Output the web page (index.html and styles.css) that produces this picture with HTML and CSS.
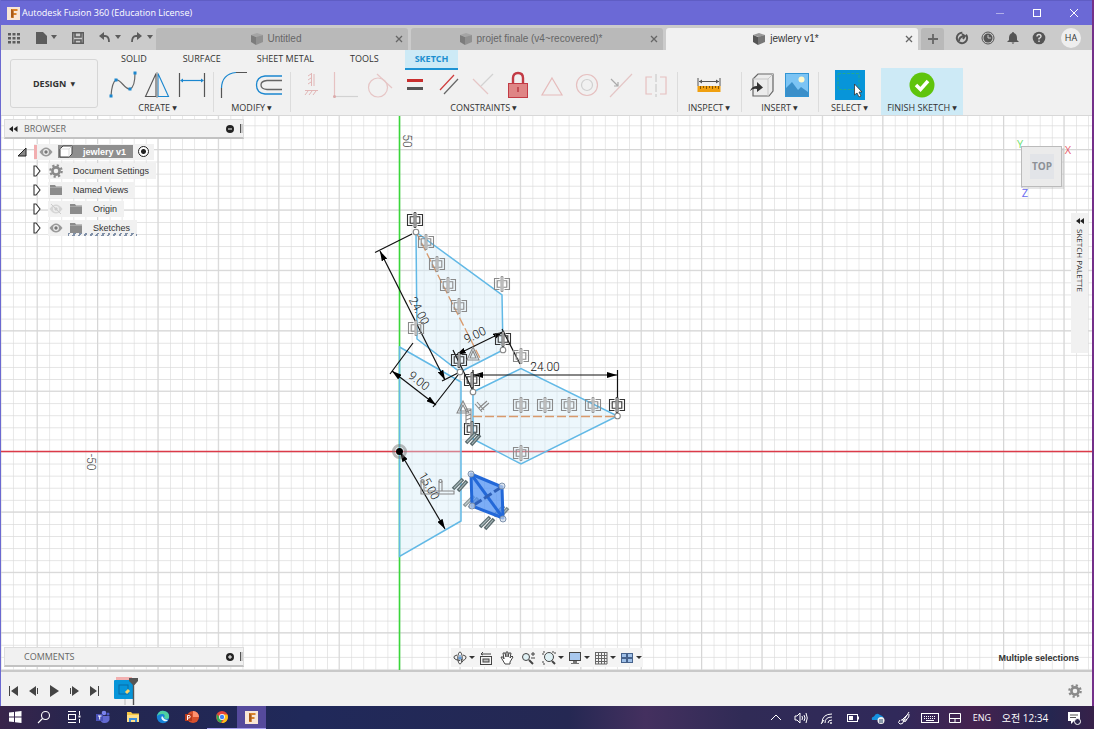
FILE: index.html
```html
<!DOCTYPE html>
<html lang="en">
<head>
    <meta charset="UTF-8">
    <meta name="viewport" content="width=device-width, initial-scale=1.0">
    <title>Autodesk Fusion 360 (Education License)</title>
    <link rel="stylesheet" href="styles.css">
</head>
<body>
    <!-- shared symbols -->
    <svg class="defs" aria-hidden="true">
        <symbol id="cube" viewBox="0 0 14 14">
            <path d="M1 3 L7 1 L13 3 L7 5Z" fill="#999"/>
            <path d="M1 3 L6 5 V13 L1 10Z" fill="#555"/>
            <path d="M6 5 L13 3 V10 L6 13Z" fill="#777"/>
        </symbol>
        <symbol id="gear" viewBox="0 0 14 14">
            <circle cx="7" cy="7" r="3.6" fill="none" stroke="#8a8a8a" stroke-width="2.6"/>
            <circle cx="7" cy="7" r="5.7" fill="none" stroke="#8a8a8a" stroke-width="2.2" stroke-dasharray="2.2 2.28"/>
        </symbol>
        <symbol id="folder" viewBox="0 0 14 12">
            <path d="M1 1H6L7 2.5H13V11H1Z" fill="#8c8c8c"/>
            <path d="M1 3.5H13" stroke="#b5b5b5" stroke-width=".7"/>
        </symbol>
        <symbol id="eye" viewBox="0 0 14 10">
            <path d="M0.5 5Q7 -4 13.5 5Q7 14 0.5 5Z" fill="#999"/>
            <circle cx="7" cy="5" r="2.9" fill="#eee"/>
            <circle cx="7" cy="5" r="1.7" fill="#777"/>
        </symbol>
        <symbol id="caret" viewBox="0 0 10 12">
            <path d="M2 1H4L8 6L4 11H2Z" fill="#fff" stroke="#333" stroke-width="1.1"/>
        </symbol>
        <symbol id="fusion" viewBox="0 0 13 13">
            <rect width="13" height="13" fill="#f8e6d6"/>
            <path d="M4 2H10.5V4H6.5V6H9.5V8H6.5V11H4Z" fill="#d9822b"/>
            <path d="M4 2L6.5 4V11L4 10Z" fill="#a85a18"/>
        </symbol>
        <symbol id="sym" viewBox="-8 -8 16 16" overflow="visible">
            <path d="M-2.5 -5.5H-7.5V5.5H-2.5M2.5 -5.5H7.5V5.5H2.5M-1.5 -3.2H-4.8V3.2H-1.5M1.5 -3.2H4.8V3.2H1.5" fill="none" stroke="currentColor" stroke-width="1.1"/>
            <path d="M-1 -7.5H1V7.5H-1Z" fill="#ddd" stroke="currentColor" stroke-width=".8"/>
        </symbol>
        <symbol id="par" viewBox="-8 -8 16 16" overflow="visible">
            <path d="M-7 4L3 -6M-2 6L7 -4" stroke="#5d6d70" stroke-width="3.6"/>
            <path d="M-6 3L2 -5M-1 5L6 -3" stroke="#a8b8ba" stroke-width="1.1"/>
        </symbol>
    </svg>

    <div class="window">
        <header class="titlebar">
            <svg width="13" height="13"><use href="#fusion"/></svg>
            <span class="title">Autodesk Fusion 360 (Education License)</span>
            <div class="window-controls">
                <button aria-label="Minimize"><svg width="10" height="10"><path d="M1 5.5H9" stroke="#b0aee8"/></svg></button>
                <button aria-label="Maximize"><svg width="10" height="10"><rect x="1.5" y="1.5" width="7" height="7" fill="none" stroke="#fff"/></svg></button>
                <button aria-label="Close"><svg width="10" height="10"><path d="M1 1L9 9M9 1L1 9" stroke="#fff"/></svg></button>
            </div>
        </header>

        <div class="tabbar">
            <div class="quick">
                <button aria-label="Data panel"><svg width="12" height="12" fill="#5c5c5c"><path d="M0 1h3v2.500H0zM4.500 1h3v2.500h-3zM9 1h3v2.500H9zM0 5h3v2.500H0zM4.500 5h3v2.500h-3zM9 5h3v2.500H9zM0 9h3v2.500H0zM4.500 9h3v2.500h-3zM9 9h3v2.500H9z"/></svg></button>
                <button class="wide" aria-label="File"><svg width="22" height="14" fill="#5c5c5c"><path d="M1 1H8L12 5V13H1ZM16 4H22L19 8Z"/></svg></button>
                <button aria-label="Save"><svg width="12" height="12"><path d="M.8.8H11.200V11.200H.8Z" fill="none" stroke="#5c5c5c" stroke-width="1.600"/><path d="M3 1V5H9V1M3 11V8H9V11" fill="none" stroke="#5c5c5c" stroke-width="1.600"/></svg></button>
                <button class="wide" aria-label="Undo"><svg width="22" height="12"><path d="M2 4H6Q10 4 10 10" fill="none" stroke="#5c5c5c" stroke-width="1.800"/><path d="M5 0V8L0 4ZM16 3H22L19 7Z" fill="#5c5c5c"/></svg></button>
                <button class="wide" aria-label="Redo"><svg width="22" height="12"><path d="M8 4H5Q1 4 1 10" fill="none" stroke="#5c5c5c" stroke-width="1.800"/><path d="M6 0V8L11 4ZM16 3H22L19 7Z" fill="#5c5c5c"/></svg></button>
            </div>
            <nav class="tabs">
                <div class="tab">
                    <a href="#"><svg width="14" height="14" opacity=".6"><use href="#cube"/></svg>Untitled</a>
                    <button aria-label="Close tab"><svg width="8" height="8"><path d="M1 1L7 7M7 1L1 7" stroke="#666" stroke-width="1.300"/></svg></button>
                </div>
                <div class="tab">
                    <a href="#"><svg width="14" height="14" opacity=".6"><use href="#cube"/></svg>projet finale (v4~recovered)*</a>
                    <button aria-label="Close tab"><svg width="8" height="8"><path d="M1 1L7 7M7 1L1 7" stroke="#666" stroke-width="1.300"/></svg></button>
                </div>
                <div class="tab active">
                    <a href="#"><svg width="14" height="14"><use href="#cube"/></svg>jewlery v1*</a>
                    <button aria-label="Close tab"><svg width="8" height="8"><path d="M1 1L7 7M7 1L1 7" stroke="#666" stroke-width="1.300"/></svg></button>
                </div>
            </nav>
            <div class="account">
                <button class="add" aria-label="New design"><svg width="10" height="10"><path d="M5 0V10M0 5H10" stroke="#666" stroke-width="1.800"/></svg></button>
                <button aria-label="Extensions"><svg width="14" height="14"><circle cx="7" cy="7" r="5.200" fill="none" stroke="#555" stroke-width="2" stroke-dasharray="26 4" transform="rotate(-20 7 7)"/><path d="M4 10Q4 6 9 5M7 3L10 5L8 8" fill="none" stroke="#555" stroke-width="1.800"/></svg></button>
                <button aria-label="Job status"><svg width="14" height="14"><circle cx="7" cy="7" r="6" fill="none" stroke="#555"/><circle cx="7" cy="7" r="4.500" fill="#555"/><path d="M7 4V7H10" fill="none" stroke="#ccc"/></svg></button>
                <button aria-label="Notifications"><svg width="14" height="14" fill="#555"><path d="M7 1Q8 1 8 2Q11 3 11 7V9L13 11H1L3 9V7Q3 3 6 2Q6 1 7 1ZM5.500 11.500H8.500L7 13Z"/></svg></button>
                <button aria-label="Help"><svg width="14" height="14"><circle cx="7" cy="7" r="6.300" fill="#555"/><path d="M5 5.500Q5 3.500 7 3.500T9 5.500Q9 6.500 7 7.500V8.500M7 9.500V11" fill="none" stroke="#ddd" stroke-width="1.400"/></svg></button>
                <button class="avatar">HA</button>
            </div>
        </div>

        <section class="ribbon">
            <button class="workspace-menu">DESIGN <span class="arrow">▼</span></button>
            <div class="ribbon-main">
                <nav class="ribbon-tabs">
                    <a href="#">SOLID</a>
                    <a href="#">SURFACE</a>
                    <a href="#">SHEET METAL</a>
                    <a href="#">TOOLS</a>
                    <a href="#" class="active">SKETCH</a>
                </nav>
                <div class="groups">
                    <div class="group create">
                        <div class="tools">
                            <button aria-label="Spline"><svg width="28" height="28"><path d="M2 25Q3 11 7 9C12 8 16 19 21 18Q26 16 26 2" fill="none" stroke="#666" stroke-width="1.200"/><path d="M.5 23.500h3v3h-3zM5.500 7.500h3v3h-3zM19.500 16.500h3v3h-3zM24.500.5h3v3h-3z" fill="#1b87cf"/></svg></button>
                            <button aria-label="Mirror"><svg width="28" height="28" fill="none" stroke-width="1.100"><path d="M13 2.500L2.500 25.500H13Z" stroke="#555"/><path d="M15 2.500L25.500 25.500H15Z" stroke="#1b87cf"/><path d="M14 1V27" stroke="#999"/></svg></button>
                            <button aria-label="Sketch Dimension"><svg width="28" height="28"><path d="M1.500 2V26M26.500 2V26" stroke="#555" stroke-width="1.200"/><path d="M4 9.500H24" stroke="#1b87cf" stroke-width="1.200"/><path d="M2 9.500L5 7.500V11.500ZM26 9.500L23 7.500V11.500Z" fill="#1b87cf"/></svg></button>
                        </div>
                        <button class="label">CREATE <span class="arrow">▼</span></button>
                    </div>
                    <div class="group modify">
                        <div class="tools">
                            <button aria-label="Fillet"><svg width="28" height="28" fill="none" stroke-width="1.200"><path d="M1.500 17Q2 3 16 1.500" stroke="#1b87cf"/><path d="M1.500 17V27M16 1.500H27" stroke="#555"/></svg></button>
                            <button aria-label="Offset"><svg width="28" height="28" fill="none" stroke-width="1.300"><path d="M27 5H10Q1.500 6 1.500 14T10 23H27" stroke="#1b87cf"/><path d="M27 9.500H12Q6 10 6 14T12 18.500H27" stroke="#666"/></svg></button>
                        </div>
                        <button class="label">MODIFY <span class="arrow">▼</span></button>
                    </div>
                    <div class="group constraints">
                        <div class="tools">
                            <button aria-label="Horizontal/Vertical"><svg width="28" height="28" fill="none" stroke="#e2b6b6"><path d="M14.500 2V15M11 5L14 3M11 9L14 7M11 13L14 11M17 3V15"/><path d="M8 19.500H21M8 24L11 20M12 24L15 20M16 24L19 20" /></svg></button>
                            <button aria-label="Coincident"><svg width="28" height="28" fill="none" stroke-width="1.200"><path d="M2.500 1V25" stroke="#e6c2c2"/><path d="M2 25.500H26" stroke="#d2d2d2"/><circle cx="2.500" cy="25.500" r="1.500" fill="#dcaaaa"/></svg></button>
                            <button aria-label="Tangent"><svg width="28" height="28" fill="none" stroke="#e6c6c6" stroke-width="1.200"><circle cx="12" cy="16.500" r="9.500"/><path d="M11 3L26 17"/></svg></button>
                            <button aria-label="Equal"><svg width="28" height="28"><path d="M6 8H22V11H6Z" fill="#c92f2f"/><path d="M6 16H22V19H6Z" fill="#555"/></svg></button>
                            <button aria-label="Parallel"><svg width="28" height="28" stroke-width="1.200"><path d="M5 19L19 4" stroke="#cf3b3b"/><path d="M9 23L23 8" stroke="#666"/></svg></button>
                            <button aria-label="Perpendicular"><svg width="28" height="28" stroke-width="1.200"><path d="M4 8L19 23" stroke="#e6c6c6"/><path d="M12 15L24 3" stroke="#d2d2d2"/></svg></button>
                            <button aria-label="Fix/Unfix"><svg width="28" height="28"><path d="M9 12V7Q9 2 14 2T19 7V12" fill="none" stroke="#c23b45" stroke-width="2.400"/><rect x="4.500" y="12.500" width="19" height="14" fill="#df8585" stroke="#c23b45"/><path d="M14 16V21" stroke="#b32d38" stroke-width="1.300"/></svg></button>
                            <button aria-label="Midpoint"><svg width="28" height="28"><path d="M14 7L24 24H4Z" fill="none" stroke="#e6bcbc" stroke-width="1.200"/></svg></button>
                            <button aria-label="Concentric"><svg width="28" height="28" fill="none" stroke-width="1.200"><circle cx="14" cy="14" r="10.500" stroke="#e6c0c0"/><circle cx="14" cy="14" r="5.500" stroke="#d0d0d0"/></svg></button>
                            <button aria-label="Collinear"><svg width="28" height="28" fill="none" stroke-width="1.200"><path d="M3 26L25 3" stroke="#e4c6c6"/><path d="M4 8L11 15M11 11V15H7" stroke="#aaa"/></svg></button>
                            <button aria-label="Symmetry"><svg width="28" height="28" fill="none" stroke-width="1.200"><path d="M10 6H4V23H10M18 6H24V23H18" stroke="#e6c0c0"/><path d="M14 3V26" stroke="#ccc" stroke-dasharray="8 2"/></svg></button>
                        </div>
                        <button class="label">CONSTRAINTS <span class="arrow">▼</span></button>
                    </div>
                    <div class="group inspect">
                        <div class="tools">
                            <button aria-label="Measure"><svg width="28" height="28"><path d="M3 7V15M25 7V15M4 10.500H24" stroke="#555"/><path d="M4 10.500L7 8.500V12.500ZM24 10.500L21 8.500V12.500Z" fill="#555"/><rect x="2.500" y="15" width="23" height="6" fill="#f0a010"/><path d="M5.500 15V18M8.500 15V17M11.500 15V18M14.500 15V17M17.500 15V18M20.500 15V17M23.500 15V18" stroke="#875500"/></svg></button>
                        </div>
                        <button class="label">INSPECT <span class="arrow">▼</span></button>
                    </div>
                    <div class="group insert">
                        <div class="tools">
                            <button aria-label="Insert Derive"><svg width="28" height="28"><path d="M5 8L10 3H25V20L21 25H5Z" fill="#ececec" stroke="#666" stroke-width="1.200"/><path d="M5 8H20V25M20 8L25 3" fill="none" stroke="#c8c8c8"/><path d="M2 20Q4 15 9 15V11L15 16.500L9 21V18Q5 17 2 20Z" fill="#333"/></svg></button>
                            <button aria-label="Insert Image"><svg width="28" height="28"><rect x="2.500" y="2.500" width="23" height="23" fill="#7cc4f4" stroke="#3295d4"/><path d="M3 17L9 11L15 19L18 16L25 21V25H3Z" fill="#3b8fc9"/><circle cx="18.500" cy="8.500" r="3" fill="#fff8cc"/></svg></button>
                        </div>
                        <button class="label">INSERT <span class="arrow">▼</span></button>
                    </div>
                    <div class="group select">
                        <div class="tools">
                            <button aria-label="Select"><svg width="30" height="30"><rect width="30" height="30" fill="#0795d9"/><rect x="3" y="3.500" width="21" height="16" fill="none" stroke="#22a890" stroke-dasharray="3 1.500"/><path d="M19.500 14V25L22 23L24 27L26 26L24 22H27Z" fill="#fff" stroke="#333" stroke-width=".8"/></svg></button>
                        </div>
                        <button class="label">SELECT <span class="arrow">▼</span></button>
                    </div>
                    <div class="group finish">
                        <div class="tools">
                            <button aria-label="Finish Sketch"><svg width="28" height="28"><circle cx="14" cy="14" r="12.500" fill="#5fc40c"/><path d="M8 14L12.500 18.500L20 10" fill="none" stroke="#fff" stroke-width="3.500"/></svg></button>
                        </div>
                        <button class="label">FINISH SKETCH <span class="arrow">▼</span></button>
                    </div>
                </div>
            </div>
        </section>

        <main class="workspace">
            <svg class="canvas" role="img" aria-label="Sketch canvas">
                <defs>
                    <pattern id="minor" width="12.08" height="12.08" x="399.5" y="451.5" patternUnits="userSpaceOnUse">
                        <path d="M0 0H12.08M0 0V12.08" stroke="#dadada" stroke-width="1.2"/>
                    </pattern>
                    <pattern id="major" width="60.4" height="60.4" x="369.3" y="421.3" patternUnits="userSpaceOnUse">
                        <path d="M0 30.2H60.4M30.2 0V60.4" stroke="#d6d6d6"/>
                    </pattern>
                    <marker id="arrow" viewBox="0 0 10 6" refX="10" refY="3" markerWidth="10" markerHeight="6" markerUnits="userSpaceOnUse" orient="auto-start-reverse">
                        <path d="M0 0L10 3L0 6Z"/>
                    </marker>
                </defs>
                <g transform="translate(-1 -116)">
                    <rect width="4000" height="3000" fill="url(#minor)"/>
                    <rect width="4000" height="3000" fill="url(#major)"/>
                    <path d="M0 451.500H4000" stroke="#dc3a48" stroke-width="1.600"/>
                    <path d="M399.500 0V3000" stroke="#3ad63a" stroke-width="1.600"/>

                    <!-- profiles -->
                    <g fill="#d2ebf8" fill-opacity=".4" stroke="#62b9e6" stroke-width="1.5">
                        <path d="M399.500 347L461 382V521L399.500 556.500Z"/>
                        <path d="M416 232L502 295L503 350L460 372L417 339Z"/>
                        <path d="M473 392L521 368.500L617.500 416L521 464L473 439Z"/>
                    </g>
                    <g fill="none" stroke="#d99a6c" stroke-width="1.3" stroke-dasharray="9 3">
                        <path d="M416 232L481 360"/>
                        <path d="M473 416.500H617"/>
                    </g>

                    <!-- dimensions -->
                    <g stroke="#111" stroke-width="1.2" fill="none">
                        <path d="M412 234L375 252.500M458 373L442 381"/>
                        <path d="M413 343L390 374M458 375L433 407"/>
                        <path d="M453 350L473 391M502 329L520 364"/>
                        <path d="M617.500 370V415M473 370V391"/>
                        <g marker-start="url(#arrow)" marker-end="url(#arrow)">
                            <path d="M380 251L445 380"/>
                            <path d="M392 371L436 405"/>
                            <path d="M456 355L503 332"/>
                            <path d="M473 375H617"/>
                            <path d="M400 452L445 529"/>
                        </g>
                    </g>
                    <g class="dims">
                        <text transform="translate(419 311) rotate(62)" dy="4">24.00</text>
                        <text transform="translate(419 381) rotate(38)" dy="4">9.00</text>
                        <text transform="translate(475 335) rotate(-26)" dy="4">9.00</text>
                        <text x="545" y="371">24.00</text>
                        <text transform="translate(429 486) rotate(60)" dy="4">15.00</text>
                        <text class="axis" transform="translate(407 141) rotate(90)" dy="4">50</text>
                        <text class="axis" transform="translate(91 462) rotate(90)" dy="4">-50</text>
                    </g>

                    <!-- constraint glyphs -->
                    <g color="#8a8a8a">
                        <use href="#sym" x="418" y="234" width="16" height="16"/>
                        <use href="#sym" x="429" y="256" width="16" height="16"/>
                        <use href="#sym" x="440" y="277" width="16" height="16"/>
                        <use href="#sym" x="451" y="298" width="16" height="16"/>
                        <use href="#sym" x="494" y="276" width="16" height="16"/>
                        <use href="#sym" x="408" y="320" width="16" height="16"/>
                        <use href="#sym" x="513" y="348" width="16" height="16"/>
                        <use href="#sym" x="513" y="397" width="16" height="16"/>
                        <use href="#sym" x="537" y="397" width="16" height="16"/>
                        <use href="#sym" x="561" y="397" width="16" height="16"/>
                        <use href="#sym" x="585" y="397" width="16" height="16"/>
                        <use href="#sym" x="513" y="445" width="16" height="16"/>
                    </g>
                    <g color="#333">
                        <use href="#sym" x="407" y="212" width="16" height="16"/>
                        <use href="#sym" x="495" y="331" width="16" height="16"/>
                        <use href="#sym" x="451" y="352" width="16" height="16"/>
                        <use href="#sym" x="464" y="372" width="16" height="16"/>
                        <use href="#sym" x="609" y="397" width="16" height="16"/>
                        <use href="#sym" x="464" y="421" width="16" height="16"/>
                    </g>
                    <g fill="none" stroke="#888" stroke-width="1.1">
                        <path d="M473 347L479 360H467ZM473 351L476 358H470Z"/>
                        <path d="M463 401L469 413H457ZM463 405L466 411H460Z"/>
                        <path d="M475 404L482 412M477 402L484 410M479 408L487 401M481 410L489 403"/>
                        <path d="M466 409V424H471V409ZM466 412L471 410M466 416L471 414M466 420L471 418"/>
                        <path d="M421 481V494H454V491H424V481ZM439 481V494M442 481V491"/>
                        <circle cx="422.500" cy="481" r="1.500"/>
                        <circle cx="440.500" cy="481" r="1.500"/>
                    </g>
                    <use href="#par" x="465" y="431" width="16" height="16"/>
                    <use href="#par" x="452" y="477" width="16" height="16"/>
                    <use href="#par" x="463" y="494" width="16" height="16" opacity=".7"/>
                    <use href="#par" x="493" y="504" width="16" height="16" opacity=".8"/>
                    <use href="#par" x="479" y="515" width="16" height="16"/>

                    <!-- selected sketch -->
                    <path d="M471 474L502 487L503 518L472 506Z" fill="#4a8df2" fill-opacity=".72" stroke="#2368d8" stroke-width="3" stroke-linejoin="round"/>
                    <path d="M471 474L503 518" stroke="#2368d8" stroke-width="3"/>
                    <path d="M474 505L500 488" stroke="#2f60b8" stroke-width="3" stroke-dasharray="9 3"/>
                    <g fill="#ccd8ea" fill-opacity=".7" stroke="#7f93ad" stroke-width="1">
                        <circle cx="471" cy="474" r="3"/>
                        <circle cx="502" cy="486" r="3"/>
                        <circle cx="503" cy="519" r="3"/>
                        <circle cx="472" cy="506" r="3"/>
                    </g>
                    <g fill="#fff" stroke="#888" stroke-width="1.1">
                        <circle cx="416" cy="232" r="2.800"/>
                        <circle cx="503" cy="350" r="2.800"/>
                        <circle cx="460" cy="372" r="2.800"/>
                        <circle cx="473" cy="392" r="2.800"/>
                        <circle cx="617.500" cy="416" r="2.800"/>
                    </g>
                    <circle cx="399.500" cy="451.500" r="6" fill="none" stroke="#777" stroke-opacity=".5" stroke-width="3"/>
                    <circle cx="399.500" cy="451.500" r="3.500"/>
                </g>
            </svg>

            <aside class="browser">
                <div class="panel-head">
                    <svg width="9" height="6" fill="#222"><path d="M0 3L4 0V6ZM4.500 3L8.500 0V6Z"/></svg>
                    <span>BROWSER</span>
                    <button aria-label="Collapse"><svg width="8" height="8"><circle cx="4" cy="4" r="4" fill="#222"/><path d="M2 4H6" stroke="#fff"/></svg></button>
                    <i class="grip"></i>
                </div>
                <ul class="tree">
                    <li class="root">
                        <svg width="10" height="10"><path d="M9 1V9H1Z" fill="#888" stroke="#222"/></svg>
                        <div class="node">
                            <i class="mark"></i>
                            <svg width="14" height="10"><use href="#eye"/></svg>
                            <span class="chip"><svg width="14" height="13"><path d="M1 4L4 1H13V9L10 12H1Z" fill="#fff" stroke="#444"/><path d="M1 4H10V12M10 4L13 1" fill="none" stroke="#ccc" stroke-width=".7"/></svg>jewlery v1</span>
                            <input type="radio" checked aria-label="Activate jewlery v1">
                        </div>
                    </li>
                    <li><svg width="10" height="12"><use href="#caret"/></svg><div class="node"><svg width="14" height="14"><use href="#gear"/></svg><span>Document Settings</span></div></li>
                    <li><svg width="10" height="12"><use href="#caret"/></svg><div class="node"><svg width="14" height="12"><use href="#folder"/></svg><span>Named Views</span></div></li>
                    <li><svg width="10" height="12"><use href="#caret"/></svg><div class="node two"><svg width="14" height="10" opacity=".3"><use href="#eye"/><path d="M2 0L12 10" stroke="#777"/></svg><svg width="14" height="12"><use href="#folder"/></svg><span>Origin</span></div></li>
                    <li><svg width="10" height="12"><use href="#caret"/></svg><div class="node two hatched"><svg width="14" height="10"><use href="#eye"/></svg><svg width="14" height="12"><use href="#folder"/></svg><span>Sketches</span></div></li>
                </ul>
            </aside>

            <div class="viewcube">
                <svg width="60" height="64">
                    <path d="M10 12V52" stroke="#9a9ae0"/>
                    <rect x="11" y="12" width="41" height="41" fill="#999" opacity=".25"/>
                    <rect x="9.500" y="10.500" width="40" height="40" fill="#ebebeb" stroke="#bbb"/>
                    <rect x="18" y="18" width="24" height="25" fill="#e2e4e8"/>
                    <text x="30" y="34" class="face">TOP</text>
                    <text x="8" y="12" fill="#6fe06f">Y</text>
                    <text x="56" y="18" fill="#e8606c">X</text>
                    <text x="13" y="61" fill="#6a6af0">Z</text>
                </svg>
            </div>

            <button class="palette"><svg width="8" height="6" fill="#222"><path d="M0 3L4 0V6ZM4 3L8 0V6Z"/></svg><span>SKETCH PALETTE</span></button>

            <div class="comments panel-head">
                <span>COMMENTS</span>
                <button aria-label="Expand"><svg width="8" height="8"><circle cx="4" cy="4" r="4" fill="#222"/><path d="M2 4H6M4 2V6" stroke="#fff"/></svg></button>
                <i class="grip"></i>
            </div>

            <div class="navbar">
                <button class="drop" aria-label="Orbit"><svg width="14" height="14" fill="none" stroke="#444"><ellipse cx="7" cy="7" rx="2.200" ry="6"/><path d="M4 4Q0 5 1 7T7 9.500M10 4Q14 5 13 7T10 9.500M9 8L8 9.500L10 11"/><path d="M7 4V9M5 7H9" stroke="#3b7cc4"/></svg></button>
                <button aria-label="Look At"><svg width="14" height="14" fill="none" stroke="#444"><rect x="1.500" y="5.500" width="11" height="8"/><rect x="4" y="8" width="6" height="3" fill="#bbb"/><path d="M2 3H12M4 1L2 3L4 4"/></svg></button>
                <button aria-label="Pan"><svg width="14" height="14" fill="#fff" stroke="#444"><path d="M5 13L2 8L1 6L3 6L4 8L3 2L5 2L6 6V1H8V6L9 2L11 2L10 7L12 5L13 6L10 11V13Z"/></svg></button>
                <button aria-label="Zoom"><svg width="14" height="14" fill="none" stroke="#444"><circle cx="5" cy="6" r="3.500" fill="#dff0f4"/><path d="M8 9L12 13" stroke-width="2"/><path d="M10 3H14M12 1V5M10 7H14"/></svg></button>
                <button class="drop" aria-label="Fit"><svg width="14" height="14" fill="none" stroke="#444"><path d="M1 4V1H4M10 1H13V4M1 10V13H4" stroke-dasharray="2 1"/><circle cx="7" cy="6" r="4.500" fill="#dff0f4"/><path d="M10 10L13 13" stroke-width="2"/></svg></button>
                <button class="drop" aria-label="Display Settings"><svg width="14" height="14"><rect x="1.500" y="1.500" width="11" height="8" fill="#a9c8ee" stroke="#444"/><path d="M5 10V12H3V13H11V12H9V10Z" fill="#777"/></svg></button>
                <button class="drop" aria-label="Grid and Snaps"><svg width="14" height="14"><path d="M1.500 1V13M4.500 1V13M7.500 1V13M10.500 1V13M13 1V13M1 1.500H13M1 4.500H13M1 7.500H13M1 10.500H13M1 13H13" stroke="#666"/></svg></button>
                <button class="drop" aria-label="Viewports"><svg width="14" height="14" fill="#9fc0e8" stroke="#46628c"><rect x="1.500" y="2.500" width="5" height="4"/><rect x="7.500" y="2.500" width="5" height="4"/><rect x="1.500" y="7.500" width="5" height="4"/><rect x="7.500" y="7.500" width="5" height="4"/></svg></button>
            </div>

            <div class="status">Multiple selections</div>
        </main>

        <footer class="timeline">
            <button aria-label="Go to start"><svg width="12" height="12" fill="#444"><path d="M1 1H2V11H1ZM10 1V11L3 6Z"/></svg></button>
            <button aria-label="Step back"><svg width="12" height="12" fill="#444"><path d="M8 1V11L1 6ZM9 3H10V9H9Z"/></svg></button>
            <button aria-label="Play"><svg width="12" height="12" fill="#444"><path d="M2 0V12L11 6Z"/></svg></button>
            <button aria-label="Step forward"><svg width="12" height="12" fill="#444"><path d="M4 1V11L11 6ZM2 3H3V9H2Z"/></svg></button>
            <button aria-label="Go to end"><svg width="12" height="12" fill="#444"><path d="M2 1V11L9 6ZM10 1H11V11H10Z"/></svg></button>
            <button class="feature" aria-label="Sketch feature"><svg width="26" height="28"><rect x="2" y="0" width="16" height="3" fill="#f2b0b0"/><rect x="0" y="3" width="20" height="19" rx="1" fill="#0795d9"/><rect x="5" y="8" width="9" height="9" fill="none" stroke="#0b6ca5"/><path d="M12 16L15 13" stroke="#ffd66b" stroke-width="3"/><path d="M11 22V28" stroke="#bbb"/><path d="M15 1H24V4L20.500 8H19L15 4Z" fill="#555"/><path d="M19.500 5V28" stroke="#555" stroke-width="1.400"/></svg></button>
            <button class="settings" aria-label="Timeline settings"><svg width="14" height="14"><use href="#gear"/></svg></button>
        </footer>
    </div>

    <div class="taskbar">
        <div class="apps">
            <button aria-label="Start"><svg width="14" height="14" fill="#fff"><path d="M1 2.500L6 2V6.500H1ZM7 1.800L13.500 1V6.500H7ZM1 7.500H6V12L1 11.500ZM7 7.500H13.500V13L7 12.200Z"/></svg></button>
            <button aria-label="Search"><svg width="14" height="14" fill="none" stroke="#fff" stroke-width="1.100"><circle cx="8.500" cy="5.500" r="4"/><path d="M5.500 8.500L1 13"/></svg></button>
            <button aria-label="Task View"><svg width="14" height="14" fill="none" stroke="#fff"><path d="M1 1.500H9M1 12.500H9M12.500 1V5M12.500 9V13"/><rect x="1.500" y="4.500" width="7" height="5"/><rect x="12" y="6" width="1" height="1"/></svg></button>
            <button aria-label="Teams"><svg width="14" height="14"><circle cx="8" cy="3" r="2.300" fill="#7b83eb"/><circle cx="12" cy="4" r="1.500" fill="#5059c9"/><path d="M4 6H13.500V10Q12 13.500 8 13Q5 13 4 9Z" fill="#6269d0"/><rect x="0" y="4" width="7" height="7" fill="#4a52b8"/><path d="M2 6H5.500M3.700 6V9.500" stroke="#fff"/></svg></button>
            <button aria-label="File Explorer"><svg width="14" height="14"><path d="M1 2H5L6.500 3.500H13V12H1Z" fill="#f6c744"/><path d="M1 5H13V12H1Z" fill="#ffe08a"/><path d="M3 8H11V12H9V10H5V12H3Z" fill="#3d8edb"/></svg></button>
            <button aria-label="Edge"><svg width="14" height="14"><circle cx="7" cy="7" r="6.200" fill="#1683d8"/><path d="M1 6Q3 0 8 1Q14 2 13 8Q11 10 8 8Q10 4 6 4Q3 4 1 6Z" fill="#4fd0a0"/><path d="M6 6Q4 9 8 11Q10 12 12 10Q8 10 7 7Z" fill="#e7f7ff"/></svg></button>
            <button aria-label="PowerPoint"><svg width="14" height="14"><circle cx="8" cy="7" r="6" fill="#d8512d"/><path d="M8 1A6 6 0 0 1 14 7H8Z" fill="#ff9270"/><rect x="0" y="4" width="7" height="7" fill="#b83b1d"/><path d="M2.500 10V5.500H4Q5.200 5.500 5.200 6.700T4 8H2.500" fill="none" stroke="#fff"/></svg></button>
            <button class="open" aria-label="Chrome"><svg width="14" height="14"><circle cx="7" cy="7" r="6" fill="#e6453a"/><path d="M1.800 4L7 10L6 12.900Q0 11 1.800 4Z" fill="#35a853"/><path d="M7 4.500H12.400A6 6 0 0 1 6.500 13L10 8Z" fill="#fbc116"/><circle cx="7" cy="7" r="2.900" fill="#fff"/><circle cx="7" cy="7" r="2.200" fill="#4285f4"/></svg></button>
            <button class="open current" aria-label="Fusion 360"><svg width="13" height="13"><use href="#fusion"/></svg></button>
        </div>
        <div class="tray">
            <div class="tray-icons">
                <button aria-label="Show hidden icons"><svg width="14" height="14"><path d="M2 9L7 4L12 9" fill="none" stroke="#fff"/></svg></button>
                <button aria-label="Volume"><svg width="14" height="14" fill="none" stroke="#fff"><path d="M1 5H3L6 2V12L3 9H1ZM8 5Q9 7 8 9M10 4Q12 7 10 10M12 2Q14.500 7 12 12"/></svg></button>
                <button aria-label="Network"><svg width="14" height="14" fill="none" stroke="#fff"><path d="M2 12Q2 3 12 3M5 12Q5 6 12 6M8 12Q8 9 12 9M1 13L4 9"/><circle cx="11" cy="12" r=".6"/></svg></button>
                <button aria-label="Battery"><svg width="14" height="14"><rect x="1.500" y="3.500" width="10" height="7" fill="none" stroke="#fff"/><path d="M3 5H7V9H3ZM12 5.500H13V8.500H12Z" fill="#fff"/></svg></button>
                <button aria-label="OneDrive"><svg width="14" height="14"><path d="M1 9Q0 6 3 5.500Q5 1 9 4Q13 5 13 9Z" fill="#1590df"/><circle cx="10" cy="9.500" r="3.500" fill="#eee"/><path d="M8 9H12M8 11H12" stroke="#246"/></svg></button>
                <button aria-label="Pen"><svg width="14" height="14" fill="none" stroke="#fff"><path d="M3 9Q0 12 3 13T7 9L12 1M5 9L10 4M4 9H9Q13 6 12 3M6 10Q9 12 10 8"/></svg></button>
                <button aria-label="Touch keyboard"><svg width="18" height="12"><rect x=".5" y="1.500" width="17" height="9" fill="none" stroke="#fff"/><path d="M3 4.500H15M3 6.500H15" stroke="#fff" stroke-dasharray="1 1"/><path d="M5 8.500H13" stroke="#fff"/></svg></button>
                <button aria-label="Touchpad"><svg width="14" height="14"><path d="M1.500 2.500H12.500V11.500H1.500ZM1 7.500H13M7 7V12" fill="none" stroke="#fff"/></svg></button>
            </div>
            <button class="lang">ENG</button>
            <button class="clock" lang="ko">오전 12:34</button>
            <button class="notice" aria-label="Notifications"><svg width="14" height="14"><path d="M1 1H13V10H7L4 13V10H1Z" fill="#fff"/><path d="M3 4H11M3 6.500H9" stroke="#555"/><circle cx="10.500" cy="10.500" r="3" fill="#2f294f" stroke="#fff"/></svg></button>
        </div>
    </div>
</body>
</html>
```
FILE: styles.css
```css
* {
    box-sizing: border-box;
}
body {
    margin: 0;
    height: 100vh;
    display: flex;
    flex-direction: column;
    overflow: hidden;
    font-family: "Open Sans", "Noto Sans", "Noto Sans CJK KR", sans-serif;
    font-size: 9px;
    line-height: 12px;
    color: #333;
    background-color: #2b2750;
}
button {
    display: flex;
    align-items: center;
    justify-content: center;
    margin: 0;
    padding: 0;
    border: 0;
    background: none;
    font: inherit;
    color: inherit;
}
a {
    color: inherit;
    text-decoration: none;
}
svg {
    display: block;
    flex: none;
}
.defs {
    position: absolute;
    width: 0;
    height: 0;
}
.window {
    flex: 1;
    min-height: 0;
    display: flex;
    flex-direction: column;
    border-left: 1px solid #6b69d1;
    border-right: 2px solid #74308a;
}

/* title bar */
.titlebar {
    height: 25px;
    display: flex;
    align-items: center;
    padding-left: 6px;
    gap: 2px;
    background-color: #6b69d6;
    border-top: 1px solid #5f5dc4;
    color: #fff;
}
.title {
    flex: 1;
}
.window-controls {
    display: flex;
}
.window-controls button {
    width: 37px;
    height: 24px;
}

/* document tabs */
.tabbar {
    height: 25px;
    display: flex;
    background-color: #cbcbcb;
}
.quick {
    width: 155px;
    display: flex;
    align-items: center;
    padding-left: 7px;
    gap: 15px;
}
.quick .wide {
    width: 22px;
}
.quick .wide + .wide {
    margin-left: -5px;
}
.tabs {
    flex: 1;
    display: flex;
    align-items: flex-end;
    gap: 3px;
}
.tab {
    flex: 1;
    height: 22px;
    display: flex;
    align-items: center;
    padding-right: 5px;
    border-radius: 3px 3px 0 0;
    background-color: #b9b9b9;
    font-family: "Liberation Sans", Arial, sans-serif;
    font-size: 10px;
    color: #666;
}
.tab a {
    flex: 1;
    display: flex;
    align-items: center;
    justify-content: center;
    gap: 4px;
}
.tab.active {
    background-color: #f1f1f1;
    color: #333;
}
.account {
    width: 174px;
    display: flex;
    align-items: center;
    justify-content: space-between;
    padding: 0 11px 0 3px;
}
.account .add {
    width: 23px;
    height: 22px;
    align-self: flex-end;
    background-color: #b9b9b9;
    border-radius: 3px 3px 0 0;
}
.account .avatar {
    width: 20px;
    height: 20px;
    margin-left: 4px;
    border-radius: 50%;
    background-color: #eee;
}

/* ribbon */
.ribbon {
    height: 66px;
    display: flex;
    gap: 8px;
    padding-left: 9px;
    background-color: #f1f1f1;
    border-bottom: 1px solid #d8d8d8;
}
.workspace-menu {
    width: 88px;
    height: 49px;
    margin-top: 9px;
    gap: 4px;
    border: 1px solid #d6d6d6;
    border-radius: 3px;
    font-weight: bold;
}
.arrow {
    font-family: "DejaVu Sans", sans-serif;
    font-size: 6px;
}
.ribbon-main {
    flex: 1;
}
.ribbon-tabs {
    display: flex;
    gap: 16px;
    padding-left: 5px;
    margin-bottom: -2px;
}
.ribbon-tabs a {
    height: 20px;
    line-height: 18px;
    padding: 0 10px;
}
.ribbon-tabs .active {
    background-color: #cdeaf6;
    border-bottom: 2px solid #1c93d4;
    color: #1c8fd0;
    font-weight: bold;
}
.groups {
    display: flex;
}
.group {
    height: 47px;
    padding: 2px 4px 0;
    position: relative;
}
.group + .group::before {
    content: "";
    position: absolute;
    left: 0;
    top: 4px;
    width: 1px;
    height: 40px;
    background-color: #dcdcdc;
}
.group.finish::before {
    display: none;
}
.tools {
    display: flex;
    height: 30px;
}
.tools button {
    flex: 1;
}
.label {
    width: 100%;
    gap: 2px;
    white-space: nowrap;
    line-height: 15px;
}
.create {
    width: 107px;
    padding-left: 0;
}
.modify {
    width: 77px;
}
.constraints {
    width: 387px;
}
.inspect {
    width: 64px;
}
.insert {
    width: 77px;
}
.select {
    width: 63px;
}
.finish {
    width: 82px;
    background-color: #cdeaf6;
}

/* canvas and the panels over it */
.workspace {
    flex: 1;
    position: relative;
    overflow: hidden;
    background-color: #fff;
    border-bottom: 2px solid #c9c9c9;
}
.canvas {
    width: 100%;
    height: 100%;
}
.dims text {
    font-family: Roboto, "Liberation Sans", sans-serif;
    font-size: 12px;
    font-weight: 300;
    text-anchor: middle;
    fill: #111;
}
.dims .axis {
    fill: #444;
}
.browser {
    position: absolute;
    left: 3px;
    top: 3px;
    width: 240px;
}
.panel-head {
    height: 20px;
    display: flex;
    align-items: center;
    padding-left: 4px;
    background-color: #f1f1f1;
    border: 1px solid #ddd;
    border-bottom: 2px solid #c2c2c2;
    color: #666;
}
.panel-head span {
    flex: 1;
    padding-left: 6px;
}
.grip {
    width: 3px;
    height: 9px;
    margin-left: 6px;
    border-left: 1px solid #555;
    background-color: #ccc;
}
.tree {
    list-style: none;
    margin: 0;
    padding: 3px 0 0 28px;
    font-family: "Liberation Sans", Arial, sans-serif;
}
.tree li {
    height: 19px;
    display: flex;
    align-items: center;
    gap: 6px;
}
.tree .root {
    margin-left: -15px;
    gap: 7px;
}
.node {
    height: 16px;
    display: flex;
    align-items: center;
    gap: 10px;
    padding: 0 7px 0 1px;
    background-color: #f1f1f1;
}
.node.two {
    gap: 6px;
}
.node.two span {
    padding-left: 4px;
}
.root .node {
    gap: 5px;
    padding: 0 5px 0 0;
}
.mark {
    width: 3px;
    height: 14px;
    background-color: #f2aeb0;
    margin-right: -3px;
}
.chip {
    height: 13px;
    display: flex;
    align-items: center;
    gap: 10px;
    padding: 0 7px 0 1px;
    background-color: #8f8f8f;
    color: #fff;
    font-weight: bold;
}
.node input {
    appearance: none;
    width: 11px;
    height: 11px;
    margin: 0;
    border: 1px solid #222;
    border-radius: 50%;
    background: radial-gradient(#222 0 2px, #fff 3px);
}
.hatched {
    position: relative;
}
.hatched::after {
    content: "";
    position: absolute;
    left: 20px;
    right: 0;
    bottom: 0;
    height: 3px;
    background: repeating-linear-gradient(120deg, #8090a8 0 2px, #f1f1f1 2px 5px);
}
.viewcube {
    position: absolute;
    top: 20px;
    right: 20px;
}
.viewcube text {
    font-family: "Open Sans", sans-serif;
    font-size: 11px;
    text-anchor: middle;
}
.viewcube .face {
    font-size: 10px;
    font-weight: bold;
    fill: #8c9096;
}
.palette {
    position: absolute;
    top: 97px;
    right: 4px;
    width: 17px;
    height: 140px;
    flex-direction: column;
    justify-content: flex-start;
    gap: 5px;
    padding-top: 5px;
    background-color: #f1f1f1;
}
.palette span {
    writing-mode: vertical-rl;
    font-size: 8px;
    white-space: nowrap;
}
.comments {
    position: absolute;
    left: 3px;
    bottom: 3px;
    width: 240px;
    padding-left: 13px;
}
.navbar {
    position: absolute;
    left: 50%;
    bottom: 3px;
    transform: translateX(-50%);
    height: 19px;
    display: flex;
    align-items: center;
    gap: 7px;
    padding: 0 4px 0 2px;
    background-color: #f4f4f4;
}
.navbar .drop::after {
    content: "";
    margin: 0 -3px 0 2px;
    border: 3px solid transparent;
    border-top-color: #333;
    border-bottom: 0;
}
.status {
    position: absolute;
    right: 13px;
    bottom: 6px;
    font-family: "Liberation Sans", Arial, sans-serif;
    font-weight: bold;
}

/* timeline */
.timeline {
    height: 34px;
    display: flex;
    align-items: center;
    gap: 8px;
    padding: 4px 10px 0 7px;
    background-color: #f1f1f1;
}
.timeline > button {
    height: 28px;
}
.timeline .feature {
    margin-left: 6px;
}
.timeline .settings {
    margin-left: auto;
}

/* taskbar */
.taskbar {
    height: 23px;
    display: flex;
    justify-content: space-between;
    background: linear-gradient(90deg, #38244a 0, #24264f 8%, #20295a 28%, #252853 52%, #44305f 59%, #302b56 68%, #30295a 82%, #45224f 89%, #252650 96%, #372149);
    color: #fff;
}
.apps {
    width: 266px;
    display: flex;
}
.apps button {
    flex: 1;
    border-bottom: 1px solid transparent;
}
.apps .open {
    border-bottom-color: #a5a0ee;
}
.apps .current {
    background-color: #554a9c;
}
.tray {
    display: flex;
    align-items: center;
}
.tray-icons {
    width: 205px;
    display: flex;
}
.tray-icons button {
    flex: 1;
}
.lang {
    width: 28px;
}
.clock {
    width: 58px;
    font-size: 10px;
}
.notice {
    width: 40px;
}
```
